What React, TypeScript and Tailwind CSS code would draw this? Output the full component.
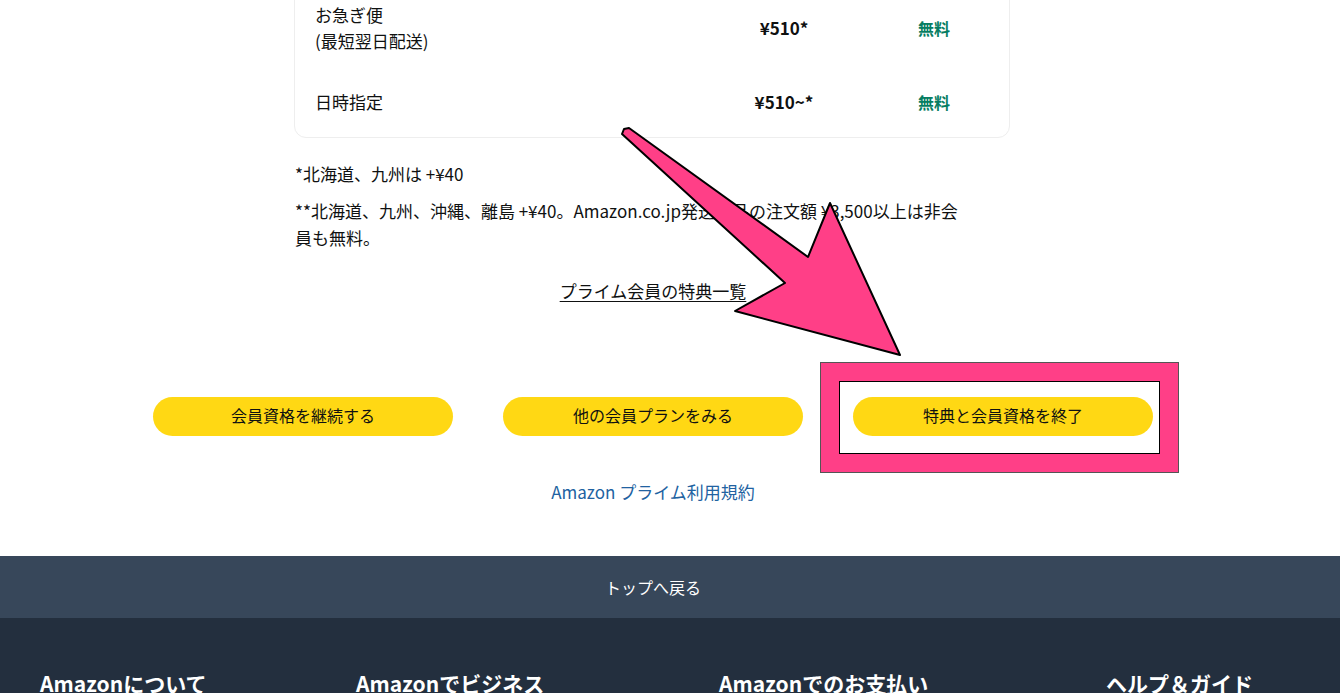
const font = { fontFamily: '"Noto Sans CJK JP", "Noto Sans", sans-serif' };

const rows = [
  { label: ['お急ぎ便', '(最短翌日配送)'], price: '¥510*', member: '無料', h: 'h-[78px]' },
  { label: ['日時指定'], price: '¥510~*', member: '無料', h: 'h-[70px]' },
];

const footerCols = ['Amazonについて', 'Amazonでビジネス', 'Amazonでのお支払い', 'ヘルプ＆ガイド'];

function Arrow() {
  return (
    <svg className="absolute left-0 top-0 pointer-events-none" width="1340" height="693" viewBox="0 0 1340 693">
      <polygon
        points="622,134 624,129 629,128 808,257 830,203 900,355 735,311 785,283"
        fill="#FF3F87"
        stroke="#000"
        strokeWidth="2"
        strokeLinejoin="round"
      />
    </svg>
  );
}

export default function App() {
  return (
    <div className="relative w-[1340px] h-[693px] overflow-hidden bg-white text-[#0F1111]" style={font}>
      <div className="w-[1000px] ml-[153px]">
        {/* shipping table */}
        <div className="w-[716px] ml-[141px] -mt-[12px] border border-[#eeeeee] rounded-xl pl-[20px] pr-[21px]">
          {rows.map((r) => (
            <div key={r.price} className={`grid grid-cols-[1fr_192px_108px] items-center ${r.h}`}>
              <div className="text-[17px] leading-[26px]">
                {r.label.map((l) => (
                  <div key={l}>{l}</div>
                ))}
              </div>
              <div className="text-center text-[17px] font-bold">{r.price}</div>
              <div className="text-center text-[16px] font-bold text-[#067D62]">{r.member}</div>
            </div>
          ))}
        </div>

        {/* notes */}
        <div className="w-[715px] ml-[142px] mt-[22px] text-[17px] leading-[27px]">
          <p>*北海道、九州は +¥40</p>
          <p className="mt-[10px] pr-[50px]">
            **北海道、九州、沖縄、離島 +¥40。Amazon.co.jp発送商品の注文額 ¥3,500以上は非会員も無料。
          </p>
        </div>

        <div className="mt-[26px] text-center text-[17px] leading-[27px]">
          <a className="underline underline-offset-[3px]">プライム会員の特典一覧</a>
        </div>

        {/* action buttons */}
        <div className="mt-[93px] flex gap-[50px]">
          {['会員資格を継続する', '他の会員プランをみる', '特典と会員資格を終了'].map((t) => (
            <button
              key={t}
              className="w-[300px] h-[39px] pb-[4px] rounded-full bg-[#FFD814] text-[16px] text-[#0F1111] flex items-center justify-center"
            >
              {t}
            </button>
          ))}
        </div>

        <div className="mt-[42px] text-center text-[17px] leading-[27px] text-[#2162A1]">
          <a>Amazon プライム利用規約</a>
        </div>
      </div>

      {/* footer */}
      <div className="mt-[51px]">
        <div className="h-[62px] pr-[34px] bg-[#37475A] flex items-center justify-center text-white text-[16px]">
          トップへ戻る
        </div>
        <div className="bg-[#232F3E] h-[200px] pt-[50px] pl-[40px] grid grid-cols-[316px_363px_387px_1fr] text-white text-[21px] font-bold">
          {footerCols.map((c) => (
            <div key={c} className="whitespace-nowrap">{c}</div>
          ))}
        </div>
      </div>

      {/* annotation overlay */}
      <div className="absolute left-[821px] top-[363px] w-[357px] h-[109px] border-[18px] border-[#FF3F87] shadow-[0_0_0_1px_#555,inset_0_0_0_1px_#000]" />
      <Arrow />
    </div>
  );
}
